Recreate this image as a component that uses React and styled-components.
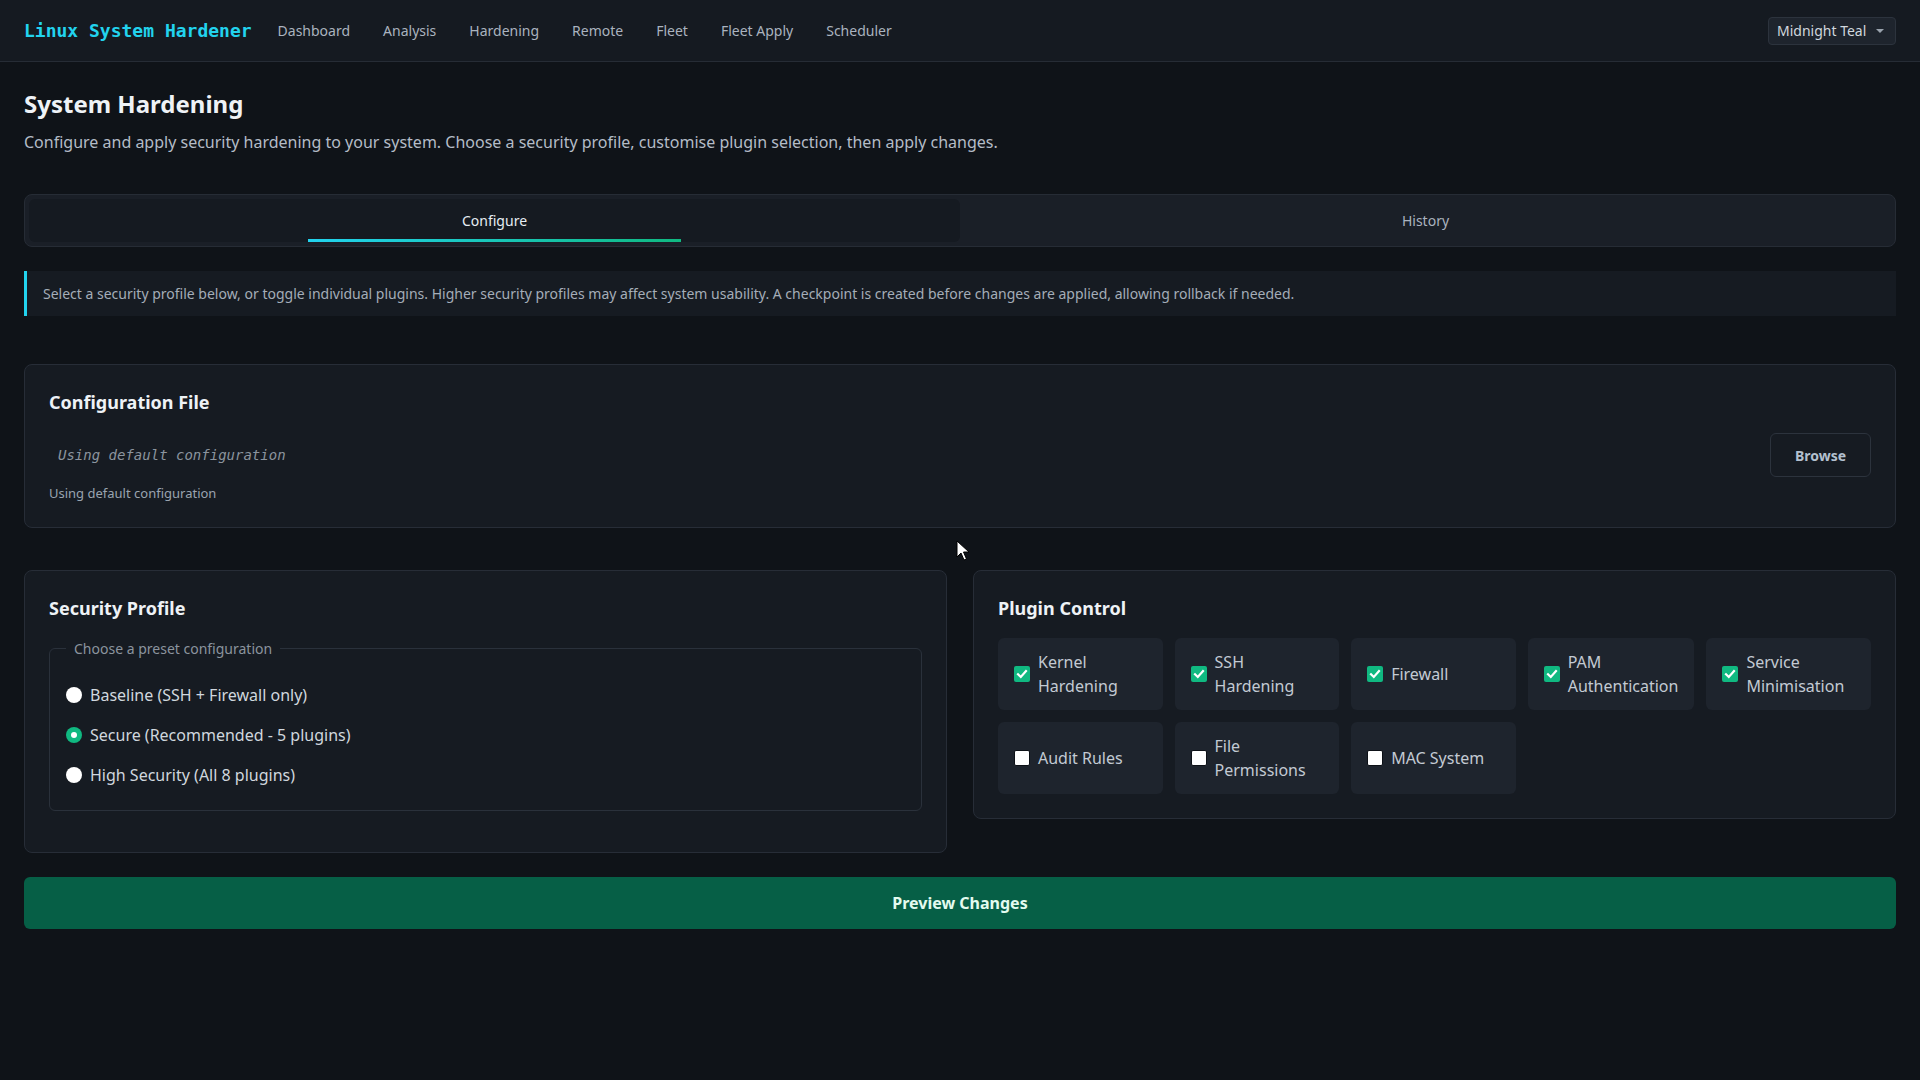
import React, { useState } from 'react';
import styled, { createGlobalStyle } from 'styled-components';

const GlobalStyle = createGlobalStyle`
    html, body {
        margin: 0;
        padding: 0;
        background: #0f1318;
        color: #e6edf3;
        font-family: "Noto Sans", "Open Sans", sans-serif;
    }
    * {
        box-sizing: border-box;
    }
`;

const Page = styled.div`
    min-height: 1080px;
    position: relative;
`;

const NavBar = styled.header`
    height: 62px;
    display: flex;
    align-items: center;
    padding: 0 24px;
    background: #151a21;
    border-bottom: 1px solid #262c35;
`;

const Brand = styled.div`
    font-family: "DejaVu Sans Mono", "Liberation Mono", monospace;
    font-weight: 700;
    font-size: 18px;
    color: #22d3ee;
`;

const NavLinks = styled.nav`
    display: flex;
    gap: 33px;
    margin-left: 26px;
`;

const NavLink = styled.a`
    font-size: 14px;
    color: #aab3bf;
    text-decoration: none;
    cursor: pointer;
`;

const ThemeSelect = styled.div`
    margin-left: auto;
    width: 128px;
    height: 28px;
    display: flex;
    align-items: center;
    justify-content: space-between;
    padding: 0 11px 0 8px;
    background: #1e242d;
    border: 1px solid #2c333d;
    border-radius: 4px;
    font-size: 14px;
    color: #d0d7de;
`;

const Caret = styled.span`
    width: 0;
    height: 0;
    border-left: 4px solid transparent;
    border-right: 4px solid transparent;
    border-top: 4px solid #9aa3ae;
`;

const Main = styled.main`
    padding: 24px;
`;

const Title = styled.h1`
    margin: 0;
    font-size: 24px;
    line-height: 36px;
    font-weight: 700;
    color: #eef2f6;
`;

const Subtitle = styled.p`
    margin: 8px 0 0;
    font-size: 16px;
    line-height: 24px;
    color: #b4bcc7;
`;

const Tabs = styled.div`
    margin-top: 40px;
    display: flex;
    padding: 4px;
    background: #1a1f27;
    border: 1px solid #262c35;
    border-radius: 8px;
`;

const Tab = styled.button`
    flex: 1;
    height: 43px;
    position: relative;
    border: none;
    border-radius: 6px;
    background: ${(p) => (p.$active ? '#151a21' : 'transparent')};
    color: ${(p) => (p.$active ? '#e6edf3' : '#aab3bf')};
    font-family: inherit;
    font-size: 14px;
    cursor: pointer;

    &::after {
        content: '';
        display: ${(p) => (p.$active ? 'block' : 'none')};
        position: absolute;
        left: 30%;
        right: 30%;
        bottom: 0;
        height: 3px;
        background: linear-gradient(90deg, #22d3ee, #10b981);
    }
`;

const InfoBanner = styled.div`
    margin-top: 24px;
    padding: 12px 16px 12px 16px;
    background: #161b22;
    border-left: 3px solid #22d3ee;
    font-size: 14px;
    line-height: 21px;
    color: #a4adb8;
`;

const Card = styled.section`
    background: #161b22;
    border: 1px solid #272d37;
    border-radius: 8px;
    padding: 24px;
`;

const ConfigCard = styled(Card)`
    margin-top: 48px;
`;

const CardTitle = styled.h2`
    margin: 0 0 ${(p) => p.$spacing || 16}px;
    font-size: 18px;
    line-height: 27px;
    font-weight: 700;
    color: #eef2f6;
`;

const FileRow = styled.div`
    display: flex;
    align-items: center;
    justify-content: space-between;
`;

const FilePath = styled.span`
    padding: 0 9px;
    font-family: "DejaVu Sans Mono", "Liberation Mono", monospace;
    font-style: italic;
    font-size: 14px;
    color: #8b949e;
`;

const BrowseButton = styled.button`
    height: 44px;
    width: 101px;
    background: #161b22;
    border: 1px solid #2c333d;
    border-radius: 6px;
    font-family: inherit;
    font-size: 14px;
    font-weight: 700;
    color: #b3c0cf;
    cursor: pointer;
`;

const Hint = styled.div`
    margin-top: 7px;
    font-size: 13px;
    line-height: 19px;
    color: #9aa4b0;
`;

const Columns = styled.div`
    margin-top: 42px;
    display: grid;
    grid-template-columns: 1fr 1fr;
    gap: 26px;
    align-items: start;
`;

const Fieldset = styled.fieldset`
    margin: 0 0 17px;
    padding: 24px 16px 23px;
    border: 1px solid #2a313b;
    border-radius: 6px;
    min-width: 0;
`;

const Legend = styled.legend`
    padding: 0 8px;
    font-size: 14px;
    line-height: 21px;
    color: #8b949e;
`;

const RadioList = styled.div`
    display: flex;
    flex-direction: column;
    gap: 16px;
`;

const RadioRow = styled.label`
    display: flex;
    align-items: center;
    gap: 8px;
    font-size: 16px;
    line-height: 24px;
    color: #d0d7de;
    cursor: pointer;
`;

const RadioDot = styled.span`
    width: 16px;
    height: 16px;
    border-radius: 50%;
    background: ${(p) => (p.$checked ? '#10b981' : '#ffffff')};
    display: flex;
    align-items: center;
    justify-content: center;

    &::after {
        content: '';
        display: ${(p) => (p.$checked ? 'block' : 'none')};
        width: 6px;
        height: 6px;
        border-radius: 50%;
        background: #ffffff;
    }
`;

const PluginGrid = styled.div`
    display: grid;
    grid-template-columns: repeat(5, 1fr);
    gap: 12px;
`;

const PluginTile = styled.label`
    display: flex;
    align-items: center;
    gap: 8px;
    min-height: 72px;
    padding: 12px 16px;
    background: #1e242d;
    border-radius: 6px;
    font-size: 16px;
    line-height: 24px;
    color: #c3cad3;
    cursor: pointer;
`;

const Check = styled.span`
    flex: none;
    width: 16px;
    height: 16px;
    border-radius: 2px;
    background: ${(p) => (p.$checked ? '#10b981' : '#ffffff')};
    border: ${(p) => (p.$checked ? 'none' : '1px solid #0d1117')};
    display: flex;
    align-items: center;
    justify-content: center;
`;

const PreviewButton = styled.button`
    display: block;
    width: 100%;
    margin-top: 24px;
    height: 52px;
    border: none;
    border-radius: 6px;
    background: #065f46;
    color: #e3fbef;
    font-family: inherit;
    font-size: 16px;
    font-weight: 700;
    cursor: pointer;
`;

const Pointer = styled.svg`
    position: absolute;
    left: 956px;
    top: 540px;
    pointer-events: none;
`;

const navItems = ['Dashboard', 'Analysis', 'Hardening', 'Remote', 'Fleet', 'Fleet Apply', 'Scheduler'];

const profiles = [
    { id: 'baseline', label: 'Baseline (SSH + Firewall only)' },
    { id: 'secure', label: 'Secure (Recommended - 5 plugins)' },
    { id: 'high', label: 'High Security (All 8 plugins)' },
];

const plugins = [
    { name: 'Kernel Hardening', on: true },
    { name: 'SSH Hardening', on: true },
    { name: 'Firewall', on: true },
    { name: 'PAM Authentication', on: true },
    { name: 'Service Minimisation', on: true },
    { name: 'Audit Rules', on: false },
    { name: 'File Permissions', on: false },
    { name: 'MAC System', on: false },
];

const App = () => {
    const [tab, setTab] = useState('configure');
    const [profile, setProfile] = useState('secure');
    const [enabled, setEnabled] = useState(plugins.map((p) => p.on));

    const togglePlugin = (index) => {
        return () => {
            setEnabled(enabled.map((v, i) => (i === index ? !v : v)));
        };
    };

    return (
        <Page>
            <GlobalStyle />
            <NavBar>
                <Brand>Linux System Hardener</Brand>
                <NavLinks>
                    {navItems.map((item) => (
                        <NavLink key={item}>{item}</NavLink>
                    ))}
                </NavLinks>
                <ThemeSelect>
                    Midnight Teal
                    <Caret />
                </ThemeSelect>
            </NavBar>

            <Main>
                <Title>System Hardening</Title>
                <Subtitle>
                    Configure and apply security hardening to your system. Choose a security profile, customise plugin selection, then apply changes.
                </Subtitle>

                <Tabs>
                    <Tab $active={tab === 'configure'} onClick={() => setTab('configure')}>Configure</Tab>
                    <Tab $active={tab === 'history'} onClick={() => setTab('history')}>History</Tab>
                </Tabs>

                <InfoBanner>
                    Select a security profile below, or toggle individual plugins. Higher security profiles may affect system usability. A checkpoint is created before changes are applied, allowing rollback if needed.
                </InfoBanner>

                <ConfigCard>
                    <CardTitle $spacing={17}>Configuration File</CardTitle>
                    <FileRow>
                        <FilePath>Using default configuration</FilePath>
                        <BrowseButton>Browse</BrowseButton>
                    </FileRow>
                    <Hint>Using default configuration</Hint>
                </ConfigCard>

                <Columns>
                    <Card>
                        <CardTitle>Security Profile</CardTitle>
                        <Fieldset>
                            <Legend>Choose a preset configuration</Legend>
                            <RadioList>
                                {profiles.map((p) => (
                                    <RadioRow key={p.id} onClick={() => setProfile(p.id)}>
                                        <RadioDot $checked={profile === p.id} />
                                        {p.label}
                                    </RadioRow>
                                ))}
                            </RadioList>
                        </Fieldset>
                    </Card>

                    <Card>
                        <CardTitle>Plugin Control</CardTitle>
                        <PluginGrid>
                            {plugins.map((p, i) => (
                                <PluginTile key={p.name} onClick={togglePlugin(i)}>
                                    <Check $checked={enabled[i]}>
                                        {enabled[i] && (
                                            <svg width="12" height="12" viewBox="0 0 12 12">
                                                <path d="M2 6.2 L4.8 9 L10 3" fill="none" stroke="#ffffff" strokeWidth="2.2" strokeLinecap="square" />
                                            </svg>
                                        )}
                                    </Check>
                                    <span>{p.name}</span>
                                </PluginTile>
                            ))}
                        </PluginGrid>
                    </Card>
                </Columns>

                <PreviewButton>Preview Changes</PreviewButton>
            </Main>

            <Pointer width="14" height="22" viewBox="0 0 14 22">
                <path d="M1 1 L1 17 L5 13 L8 20 L10.5 19 L7.5 12 L13 12 Z" fill="#ffffff" stroke="#000000" strokeWidth="1" strokeLinejoin="round" />
            </Pointer>
        </Page>
    );
};

export default App;
